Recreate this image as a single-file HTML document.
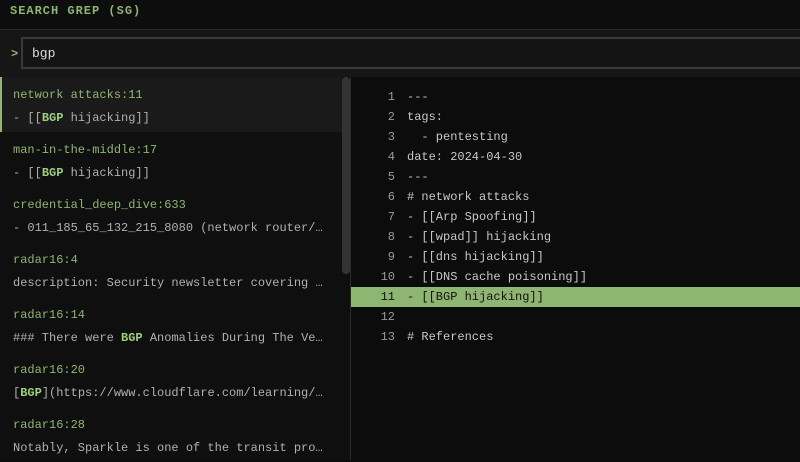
<!DOCTYPE html>
<html><head><style>
*{margin:0;padding:0;box-sizing:border-box}
body{width:800px;height:460px;background:#0d0d0d;font-family:"Liberation Mono",monospace;font-size:12px;overflow:hidden;position:relative;color:#c8c8c8}
.hdr{position:absolute;left:0;top:0;width:800px;height:29px;background:#0d0d0d;color:#8fb573;font-weight:bold;letter-spacing:1px;padding:4px 0 0 10px}
.bar{position:absolute;left:0;top:29px;width:800px;height:48px;background:#161616;border-top:1px solid #262626}
.prompt{position:absolute;left:11px;top:47px;color:#8fb573;font-weight:bold}
.inp{position:absolute;left:21px;top:37px;width:790px;height:32px;border:2px solid #3a3a3a;background:#141414;padding:7px 0 0 9px;font-size:13px;color:#ddd}
.left{position:absolute;left:0;top:77px;width:350px;height:383px;background:#0f0f0f}
.item{position:absolute;left:0;width:342px;height:55px;padding-left:13px}
.item .t{position:absolute;top:11px;left:13px;color:#8fb573}
.item .c{position:absolute;top:34px;left:13px;color:#b0b0b0;white-space:pre}
.sel{background:#1a1a1a;border-left:2px solid #8fb573}
.b{color:#9ccf7e;font-weight:bold}
.sb{position:absolute;left:342px;top:77px;width:8px;height:197px;background:#333;border-radius:4px}
.div{position:absolute;left:350px;top:77px;width:1px;height:383px;background:#2a2a2a}
.right{position:absolute;left:351px;top:77px;width:449px;height:383px;background:#0c0c0c}
.ln{position:absolute;left:0;width:449px;height:20px;white-space:pre;color:#c8c8c8}
.ln span{display:inline-block;width:44px;text-align:right;color:#9a9a9a;margin-right:12px}
.ln.h{background:#8fb573;color:#111}
.ln.h span{color:#111}
</style></head><body>
<div class="hdr">SEARCH GREP (SG)</div>
<div class="bar"></div>
<div class="prompt">&gt;</div>
<div class="inp">bgp</div>
<div class="left">
<div class="item sel" style="top:0"><div class="t" style="left:11px">network attacks:11</div><div class="c" style="left:11px">- [[<span class="b">BGP</span> hijacking]]</div></div>
<div class="item" style="top:55px"><div class="t">man-in-the-middle:17</div><div class="c">- [[<span class="b">BGP</span> hijacking]]</div></div>
<div class="item" style="top:110px"><div class="t">credential_deep_dive:633</div><div class="c">- 011_185_65_132_215_8080 (network router/…</div></div>
<div class="item" style="top:165px"><div class="t">radar16:4</div><div class="c">description: Security newsletter covering …</div></div>
<div class="item" style="top:220px"><div class="t">radar16:14</div><div class="c">### There were <span class="b">BGP</span> Anomalies During The Ve…</div></div>
<div class="item" style="top:275px"><div class="t">radar16:20</div><div class="c">[<span class="b">BGP</span>](https://www.cloudflare.com/learning/…</div></div>
<div class="item" style="top:330px"><div class="t">radar16:28</div><div class="c">Notably, Sparkle is one of the transit pro…</div></div>
</div>
<div class="sb"></div>
<div class="div"></div>
<div class="right">
<div class="ln" style="top:10px;line-height:20px"><span>1</span>---</div>
<div class="ln" style="top:30px;line-height:20px"><span>2</span>tags:</div>
<div class="ln" style="top:50px;line-height:20px"><span>3</span>  - pentesting</div>
<div class="ln" style="top:70px;line-height:20px"><span>4</span>date: 2024-04-30</div>
<div class="ln" style="top:90px;line-height:20px"><span>5</span>---</div>
<div class="ln" style="top:110px;line-height:20px"><span>6</span># network attacks</div>
<div class="ln" style="top:130px;line-height:20px"><span>7</span>- [[Arp Spoofing]]</div>
<div class="ln" style="top:150px;line-height:20px"><span>8</span>- [[wpad]] hijacking</div>
<div class="ln" style="top:170px;line-height:20px"><span>9</span>- [[dns hijacking]]</div>
<div class="ln" style="top:190px;line-height:20px"><span>10</span>- [[DNS cache poisoning]]</div>
<div class="ln h" style="top:210px;line-height:20px"><span>11</span>- [[BGP hijacking]]</div>
<div class="ln" style="top:230px;line-height:20px"><span>12</span></div>
<div class="ln" style="top:250px;line-height:20px"><span>13</span># References</div>
</div>
</body></html>
